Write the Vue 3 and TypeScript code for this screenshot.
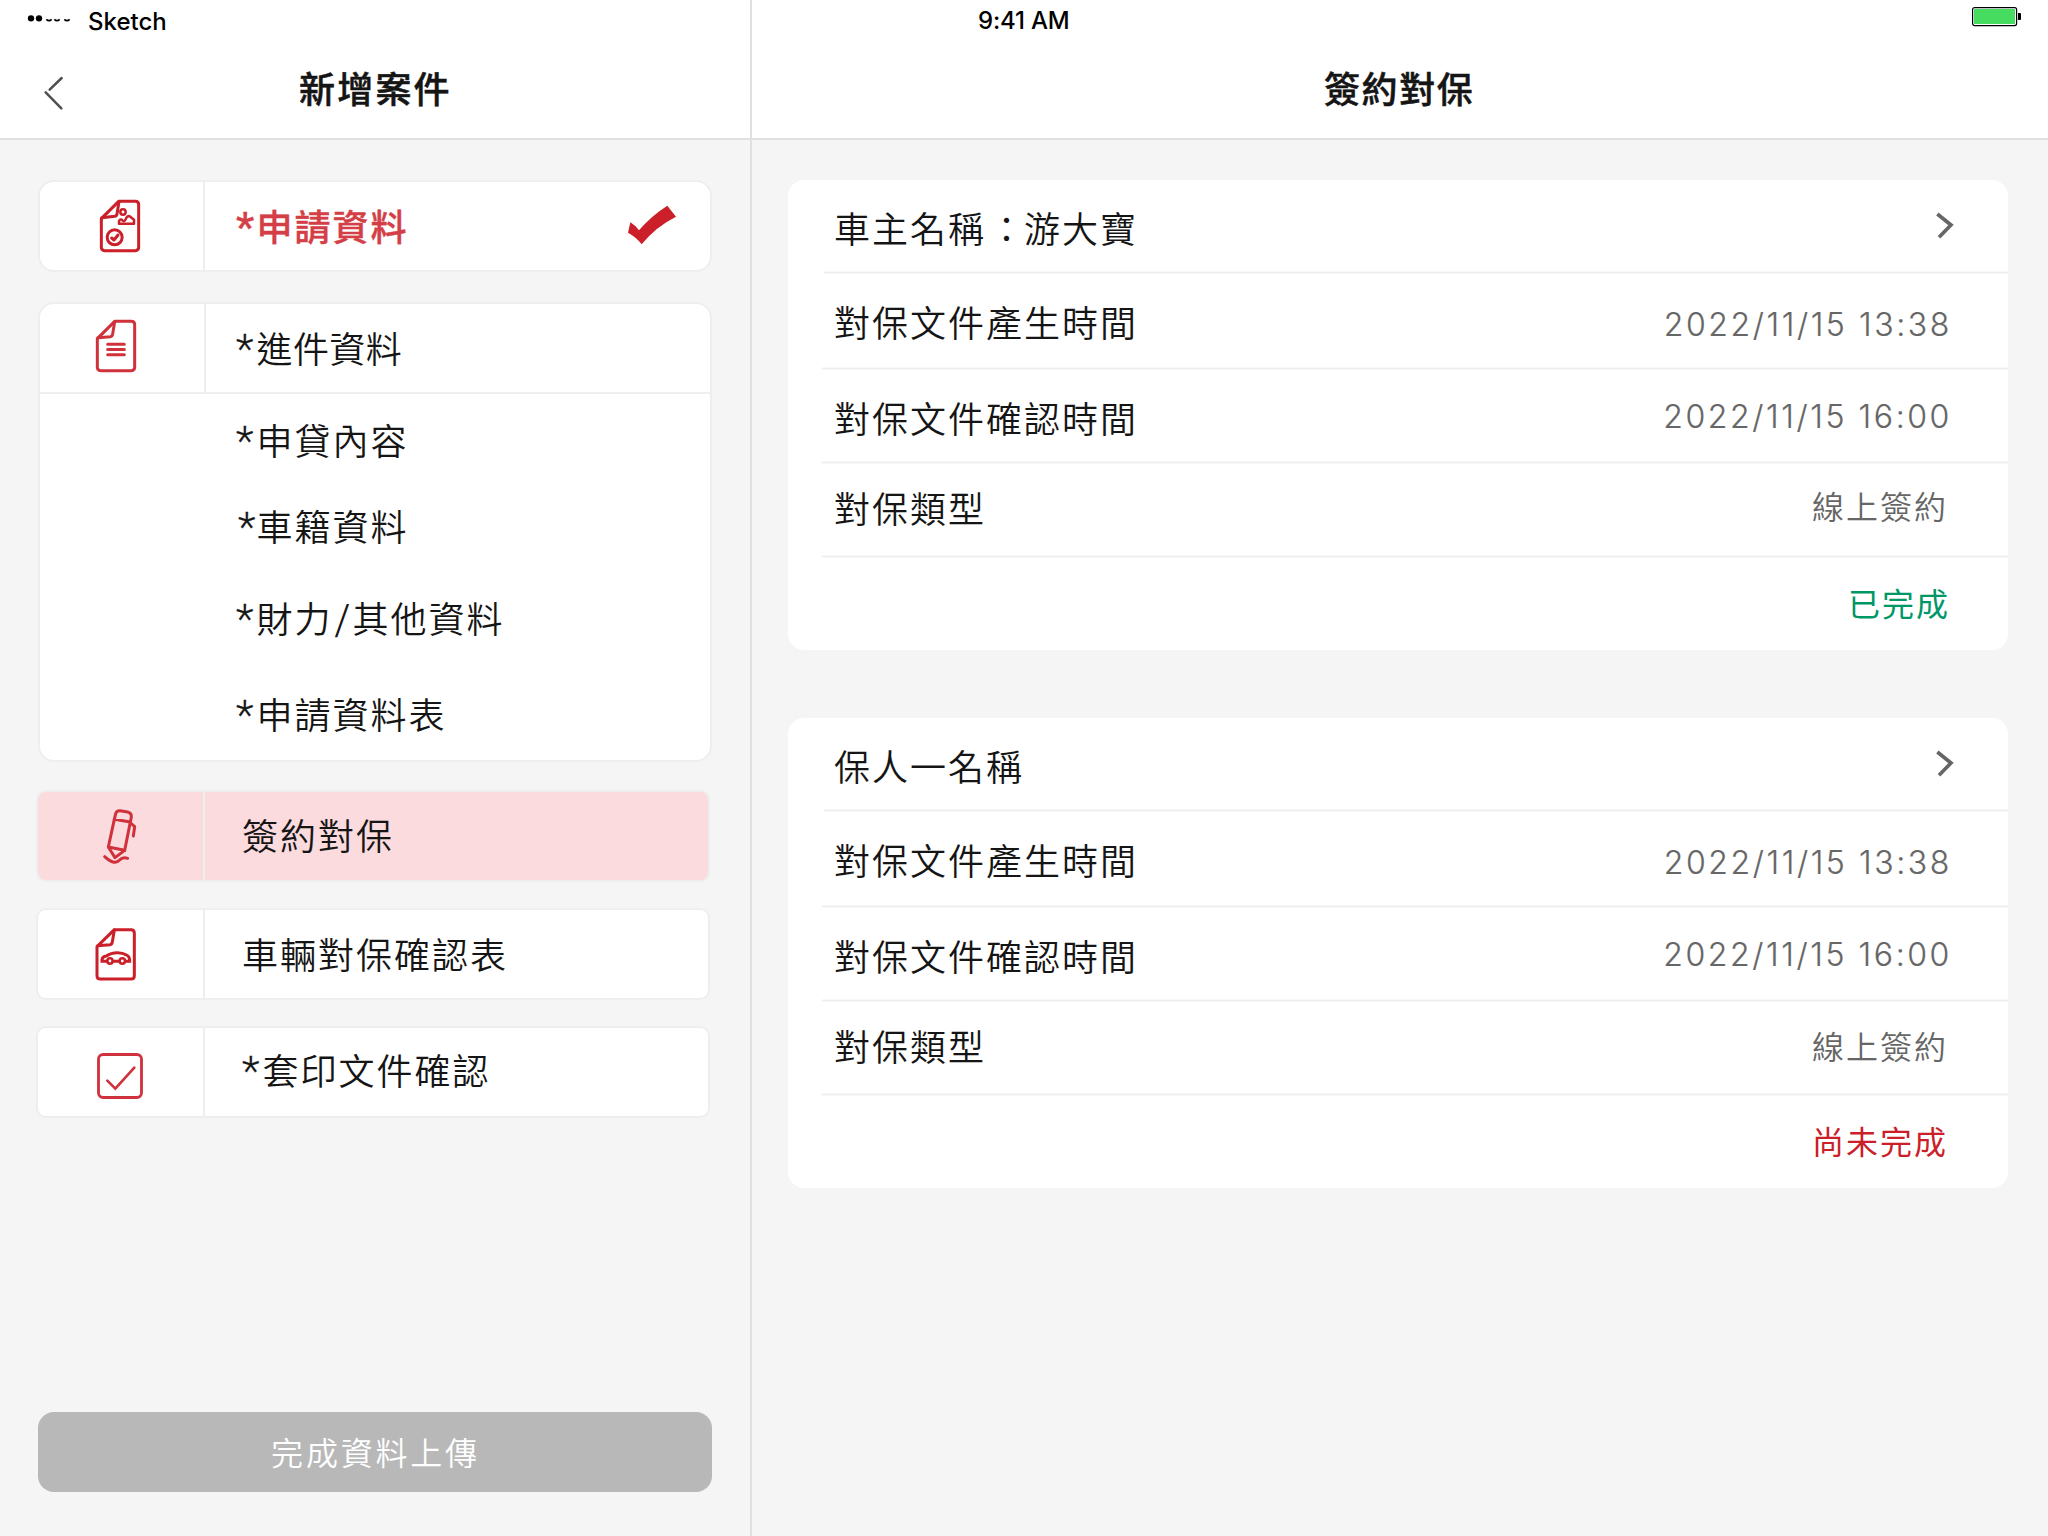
<script setup lang="ts">
import { h, type FunctionalComponent } from 'vue'

interface Field {
  label: string
  value: string
  kind: string
}

interface Party {
  id: string
  name: string
  fields: Field[]
  status: string
  done: boolean
}

const markClasses: Record<string, string> = { '*': 'star', '/': 'slash', '：': 'colon' }

// Punctuation is set apart from the ideographs so that it can be spaced on its own.
const Label: FunctionalComponent<{ text: string }> = (props) =>
  h(
    'span',
    { class: 'text' },
    props.text
      .split(/([*/：])/)
      .filter(Boolean)
      .map((part) => (markClasses[part] ? h('span', { class: markClasses[part] }, part) : part)),
  )
Label.props = ['text']

const sections: { text: string; kind: string }[] = [
  { text: '*申貸內容', kind: 'loan' },
  { text: '*車籍資料', kind: 'vehicle' },
  { text: '*財力/其他資料', kind: 'finance' },
  { text: '*申請資料表', kind: 'form' },
]

const buildFields = (): Field[] => [
  { label: '對保文件產生時間', value: '2022/11/15 13:38', kind: 'created' },
  { label: '對保文件確認時間', value: '2022/11/15 16:00', kind: 'confirmed' },
  { label: '對保類型', value: '線上簽約', kind: 'type' },
]

const parties: Party[] = [
  { id: 'owner', name: '車主名稱：游大寶', fields: buildFields(), status: '已完成', done: true },
  { id: 'guarantor', name: '保人一名稱', fields: buildFields(), status: '尚未完成', done: false },
]
</script>

<template>
  <div class="screen">
    <aside class="side">
      <header class="head">
        <div class="status">
          <svg class="signal" width="46" height="10" viewBox="81 42 138 30">
            <circle cx="93" cy="55" r="9.5" />
            <circle cx="117" cy="55" r="9.5" />
            <path d="M139 58Q147 66 155 58M163 58Q171 66 179 58M193 58Q201 66 209 58" fill="none" stroke="#000" stroke-width="5" />
          </svg>
          <span class="carrier">Sketch</span>
        </div>
        <div class="bar">
          <svg class="back" width="24" height="38" viewBox="126 222 72 114">
            <path d="M185 234L149 269M137 277L184 325" fill="none" stroke="#505050" stroke-width="7.5" stroke-linecap="round" />
          </svg>
          <h1 class="title side-title">新增案件</h1>
        </div>
      </header>

      <nav class="menu">
        <div class="card first">
          <div class="cell">
            <svg class="ico ico-apply" width="44" height="56" viewBox="234 84 132 168">
              <g fill="none" stroke="#cb1f29" stroke-width="9" stroke-linejoin="round" stroke-linecap="round">
                <path d="M296 94H346Q356 94 356 104V232Q356 242 346 242H254Q244 242 244 232V146Z" />
                <path d="M297 95L291 132Q290 138 284 139L246 143" />
                <circle cx="309" cy="126" r="8" stroke-width="7.5" />
                <path d="M297 161V153Q300 147 305 149Q311 158 317 148Q322 136 329 139L342 149V161Z" stroke-width="7.5" />
                <circle cx="284" cy="202" r="22.5" />
                <path d="M275 204L282 210L294 195" />
              </g>
            </svg>
          </div>
          <div class="body">
            <Label class="active" text="*申請資料" />
            <svg class="tick" width="50" height="40" viewBox="561 226 150 120">
              <path d="M571 278Q586 287 597 302Q633 259 682 228L708 261Q646 292 605 344Q591 324 564 309Z" fill="#cb1f29" />
            </svg>
          </div>
        </div>

        <div class="card group">
          <div class="group-head">
            <div class="cell">
              <svg class="ico ico-doc" width="44" height="56" viewBox="222 444 132 168">
                <g fill="none" stroke="#d0323b" stroke-width="9" stroke-linejoin="round" stroke-linecap="round">
                  <path d="M284 454H334Q344 454 344 464V592Q344 602 334 602H242Q232 602 232 592V506Z" />
                  <path d="M284 455L278 492Q277 499 271 500L234 503" />
                  <path d="M263 523H313M263 538.5H313M263 554H313" />
                </g>
              </svg>
            </div>
            <div class="body"><Label class="tight" text="*進件資料" /></div>
          </div>
          <Label v-for="s in sections" :key="s.kind" class="sub" :class="s.kind" :text="s.text" />
        </div>

        <div class="card small selected">
          <div class="cell">
            <svg class="ico ico-pen" width="36" height="58" viewBox="246 114 108 174">
              <g fill="none" stroke="#d0323b" stroke-width="9" stroke-linejoin="round" stroke-linecap="round">
                <path d="M283 148L287 131Q290 121 300 122L323 126Q335 129 334 141L331 156Z" />
                <path d="M283 148L265 231L314 241L331 156" />
                <path d="M265 231L285 263L314 241" />
                <path d="M332 159L344 170L340 198" />
                <path d="M254 260C272 277 288 282 299 270C306 262 314 262 323 265" />
              </g>
            </svg>
          </div>
          <div class="body"><Label class="sign" text="簽約對保" /></div>
        </div>

        <div class="card small">
          <div class="cell">
            <svg class="ico ico-car" width="44" height="56" viewBox="222 468 132 168">
              <g fill="none" stroke="#cb1f29" stroke-width="9" stroke-linejoin="round" stroke-linecap="round">
                <path d="M283 479H333Q343 479 343 489V617Q343 627 333 627H241Q231 627 231 617V530Z" />
                <path d="M283 480L277 516Q276 523 270 524L233 527" />
                <path d="M261 574H246V569Q247 559 259 558Q273 548 292 548Q308 548 321 556Q329 559 329 574H316M279 574H298" stroke-linejoin="miter" />
                <circle cx="270" cy="573" r="8" stroke-width="7.5" />
                <circle cx="307" cy="573" r="8" stroke-width="7.5" />
              </g>
            </svg>
          </div>
          <div class="body"><Label text="車輛對保確認表" /></div>
        </div>

        <div class="card small">
          <div class="cell">
            <svg class="ico ico-check" width="48" height="48" viewBox="228 846 144 144">
              <g fill="none" stroke="#d0323b" stroke-width="8.5" stroke-linecap="round">
                <rect x="235.5" y="853.5" width="129" height="129" rx="14" />
                <path d="M262 932L286 956L343 893" stroke-width="8" />
              </g>
            </svg>
          </div>
          <div class="body"><Label class="print" text="*套印文件確認" /></div>
        </div>
      </nav>

      <button class="submit" type="button">完成資料上傳</button>
    </aside>

    <main class="main">
      <header class="head">
        <div class="status">
          <span class="clock">9:41 AM</span>
          <svg class="battery" width="50" height="20" viewBox="0 0 50 20">
            <rect x="0.6" y="0.6" width="44" height="18" rx="2" fill="none" stroke="#000" stroke-width="1.2" />
            <rect x="2" y="2" width="41" height="15" rx="0.5" fill="#46dc5f" />
            <path d="M46 6H48Q49 6 49 7V12Q49 13 48 13H46Z" />
          </svg>
        </div>
        <div class="bar"><h1 class="title main-title">簽約對保</h1></div>
      </header>

      <div class="list">
        <section v-for="p in parties" :key="p.id" class="party">
          <div class="row name">
            <Label :text="p.name" />
            <svg class="chevron" width="21" height="30" viewBox="885 633 63 90">
              <path d="M892 642L933 675L897 712" fill="none" stroke="#666" stroke-width="11" />
            </svg>
          </div>
          <div v-for="f in p.fields" :key="f.kind" class="row" :class="f.kind">
            <Label :text="f.label" />
            <span class="value">{{ f.value }}</span>
          </div>
          <div class="row last">
            <span class="value" :class="p.done ? 'done' : 'pending'">{{ p.status }}</span>
          </div>
        </section>
      </div>
    </main>
  </div>
</template>

<style>
body {
  margin: 0;
}
</style>

<style scoped>
.screen {
  display: flex;
  width: 2048px;
  height: 1536px;
  overflow: hidden;
  background: #f5f5f5;
  color: #151515;
  font-family: "Noto Sans CJK TC", sans-serif;
}
.side {
  box-sizing: border-box;
  display: flex;
  flex-direction: column;
  width: 752px;
  border-right: 2px solid #e0e0e0;
}
.main {
  flex: 1;
}
.head {
  box-sizing: border-box;
  height: 140px;
  background: #fff;
  border-bottom: 2px solid #e0e0e0;
}
.status {
  display: flex;
  height: 42px;
  color: #000;
  font: 500 24px/42px Inter, sans-serif;
}
.signal {
  margin: 14px 0 0 27px;
}
.carrier {
  margin-left: 15px;
  line-height: 44px;
}
.clock {
  margin-left: 226px;
  letter-spacing: -0.2px;
}
.battery {
  margin: 7px 26px 0 auto;
}
.bar {
  display: flex;
}
.back {
  margin: 32px 0 0 42px;
}
.title {
  margin: 19px 0 0;
  font-size: 36px;
  line-height: 52px;
  font-weight: 500;
  letter-spacing: 2.2px;
  -webkit-text-stroke: 0.5px currentColor;
}
.side-title {
  margin-left: 233px;
}
.main-title {
  margin-left: 572px;
  letter-spacing: 1.6px;
}
:deep(.text) {
  font-size: 36px;
  font-weight: 350;
  line-height: 52px;
  letter-spacing: 2px;
  white-space: nowrap;
}
:deep(.star) {
  display: inline-block;
  width: 20.5px;
  font: 300 41px/36px Roboto, sans-serif;
  letter-spacing: 0;
  -webkit-text-stroke: 0.3px currentColor;
}
:deep(.slash) {
  display: inline-block;
  width: 20px;
  margin: 0 1px 0 -1px;
  font: 300 38px/36px Inter, sans-serif;
  letter-spacing: 0;
  text-align: center;
  transform: skewX(-5deg);
}
:deep(.colon) {
  margin: 0 -2.5px 0 2.5px;
}
.menu {
  display: flex;
  flex-direction: column;
  padding-top: 40px;
}
.card {
  box-sizing: border-box;
  display: flex;
  width: 674px;
  height: 92px;
  margin: 0 0 30px 38px;
  border: 2px solid #eee;
  border-radius: 16px;
  background: #fff;
}
.cell {
  box-sizing: border-box;
  flex: none;
  width: 165px;
  border-right: 2px solid #eee;
}
.ico {
  display: block;
}
.ico-apply {
  margin: 16px 0 0 58px;
}
.ico-doc {
  margin: 14px 0 0 54px;
}
.ico-pen {
  margin: 16px 0 0 64px;
}
.ico-car {
  margin: 16px 0 0 56px;
}
.ico-check {
  margin: 24px 0 0 58px;
}
.body {
  display: flex;
  flex: 1;
  padding: 17px 0 0 31px;
}
.text.active {
  color: #d43f47;
  font-weight: 500;
  -webkit-text-stroke: 0.4px currentColor;
}
.active :deep(.star) {
  font-weight: 500;
}
.text.tight {
  letter-spacing: 0.4px;
}
.tick {
  margin: 6px 33px 0 auto;
}
.group {
  flex-direction: column;
  height: 460px;
  margin-bottom: 28px;
}
.group-head {
  display: flex;
  height: 88px;
  border-bottom: 2px solid #eee;
}
.group-head .cell {
  width: 166px;
}
.group-head .body {
  padding-left: 30px;
}
.sub {
  margin: 19px 0 0 196px;
}
.sub.vehicle {
  margin: 34px 0 0 198px;
}
.vehicle :deep(.star) {
  width: 18.5px;
}
.sub.finance {
  margin-top: 40px;
}
.sub.form {
  margin-top: 44px;
}
.small {
  margin: 0 0 26px 36px;
  border-radius: 10px;
}
.small .cell {
  width: 167px;
}
.small .body {
  padding-left: 37px;
}
.sign {
  margin-top: -1px;
}
.print {
  margin-top: -2px;
}
.selected {
  background: #fbdbdd;
}
.submit {
  width: 674px;
  height: 80px;
  margin: auto 0 44px 38px;
  padding: 0 0 2px 1px;
  border: 0;
  border-radius: 16px;
  background: #b8b8b8;
  color: #fff;
  font: 350 32px/46px "Noto Sans CJK TC", sans-serif;
  letter-spacing: 2.8px;
}
.list {
  display: flex;
  flex-direction: column;
  gap: 68px;
  padding: 40px 40px 0 36px;
}
.party {
  height: 470px;
  border-radius: 16px;
  background: #fff;
}
.row {
  display: flex;
  height: 94px;
  margin: 0 -2px 0 34px;
  padding: 0 61px 0 12px;
  background: linear-gradient(to top, #f8f8f8 1px, #ededed 1px 2px, #f8f8f8 2px 3px, transparent 3px);
}
.row.name {
  margin-left: 36px;
  padding: 0 54px 0 10px;
}
.row.last {
  background: none;
}
.row.created {
  height: 96px;
}
.row .text {
  margin-top: 21px;
}
.row.type .text {
  margin-top: 17px;
}
.chevron {
  margin: 31px 0 0 auto;
}
.value {
  margin: 18px 1px 0 auto;
  color: #666;
  font-size: 32px;
  font-weight: 350;
  line-height: 46px;
  letter-spacing: 2px;
}
.party:last-child .type .value {
  margin-top: 20px;
}
.created .value,
.confirmed .value {
  margin: 28px -3px 0 auto;
  font-family: Inter, sans-serif;
  letter-spacing: 2.6px;
  -webkit-text-stroke: 0.2px currentColor;
}
.confirmed .value {
  margin-top: 24px;
}
.value.done {
  margin: 21px -1px 0 auto;
  color: #009766;
  font-weight: 400;
}
.value.pending {
  margin: 21px 1px 0 auto;
  color: #cb1f29;
  font-weight: 400;
}
</style>
